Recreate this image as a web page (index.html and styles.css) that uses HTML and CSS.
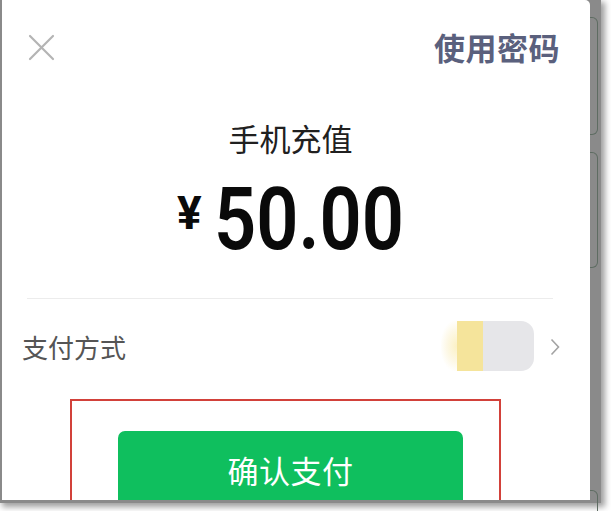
FILE: index.html
```html
<!DOCTYPE html>
<html lang="zh-CN">
<head>
<meta charset="utf-8">
<title>确认支付</title>
<link rel="stylesheet" href="styles.css">
</head>
<body>
<div class="screen">
  <div class="frame">
    <div class="panel">
      <header class="header">
        <svg class="close" width="27" height="27" viewBox="0 0 27 27" aria-hidden="true">
          <path d="M2 2L25 25M25 2L2 25" stroke="#b4b4b4" stroke-width="2.2" fill="none" stroke-linecap="round"/>
        </svg>
        <span class="pwd">使用密码</span>
      </header>
      <div class="title">手机充值</div>
      <div class="amount"><span class="yen">¥</span><span class="num">50.00</span></div>
      <div class="divider"></div>
      <div class="method">
        <span class="method-label">支付方式</span>
        <div class="method-right">
          <div class="card"><span class="glow"></span><span class="yellow"></span><span class="gray"></span></div>
          <svg class="chevron" width="10" height="18" viewBox="0 0 10 18" aria-hidden="true">
            <path d="M1.5 1.5L8.5 9L1.5 16.5" stroke="#a3a3a3" stroke-width="1.6" fill="none"/>
          </svg>
        </div>
      </div>
      <div class="highlight">
        <div class="btn">确认支付</div>
      </div>
    </div>
    <div class="strip">
      <div class="tab tab-1"></div>
      <div class="tab tab-2"></div>
      <div class="tab tab-3"></div>
    </div>
  </div>
</div>
</body>
</html>
```

FILE: styles.css
```css
* { box-sizing: border-box; }
html, body { margin: 0; padding: 0; background: #ffffff; }
body { font-family: "Noto Sans CJK SC", "Noto Sans", sans-serif; }

.screen {
  width: 611px;
  height: 511px;
  overflow: hidden;
  background: #ffffff;
}

.frame {
  width: 601px;
  height: 503px;
  display: flex;
  background: #8a8a8a;
  box-shadow: 3px 3px 6px 1px rgba(0, 0, 0, 0.38);
}

.panel {
  width: 588px;
  height: 500px;
  margin-left: 2px;
  background: #ffffff;
  border-top-right-radius: 5px;
  overflow: hidden;
  display: flex;
  flex-direction: column;
}

.header {
  height: 67px;
  padding: 27px 30px 0 26px;
  display: flex;
  justify-content: space-between;
  align-items: center;
  flex-shrink: 0;
}
.header > * { height: 40px; }
.close { width: 27px; height: 27px; }
.pwd {
  font-size: 31px;
  line-height: 40px;
  font-weight: 700;
  color: #5a607d;
  letter-spacing: 0.5px;
}

.title {
  margin-top: 51px;
  padding-right: 11px;
  text-align: center;
  font-size: 31px;
  line-height: 40px;
  color: #202020;
  flex-shrink: 0;
}

.amount {
  margin-top: 18px;
  height: 87px;
  padding-right: 11px;
  display: flex;
  justify-content: center;
  align-items: flex-start;
  color: #0a0a0a;
  font-family: Roboto, "Liberation Sans", sans-serif;
  font-weight: 700;
  flex-shrink: 0;
}
.yen {
  font-size: 46px;
  line-height: 46px;
  margin-top: 14px;
  margin-right: 12px;
}
.num {
  display: inline-block;
  font-size: 87px;
  line-height: 87px;
  font-weight: 600;
  transform: scaleX(0.85);
  transform-origin: left center;
  margin-right: -33px;
}

.divider {
  margin-top: 35px;
  margin-left: 25px;
  width: 526px;
  height: 1px;
  background: #ececec;
  flex-shrink: 0;
}

.method {
  height: 94px;
  padding: 0 30px 0 20px;
  display: flex;
  justify-content: space-between;
  align-items: center;
  flex-shrink: 0;
}
.method-label {
  font-size: 26px;
  line-height: 34px;
  color: #555555;
  margin-top: 2px;
}
.method-right {
  display: flex;
  align-items: center;
  gap: 16px;
}
.card {
  display: flex;
  height: 50px;
  width: 93px;
}
.glow {
  width: 16px;
  background: radial-gradient(ellipse at 100% 50%, #fbf1c4 0%, #fdf8e6 45%, rgba(255, 255, 255, 0) 75%);
}
.yellow {
  width: 26px;
  background: #f5e49b;
}
.gray {
  width: 51px;
  background: #e6e6e9;
  border-radius: 0 13px 13px 0;
}
.chevron { margin-top: 2px; }

.highlight {
  margin-top: 6px;
  margin-left: 68px;
  width: 431px;
  height: 160px;
  border: 2px solid #d2413a;
  padding: 30px 0 0 46px;
  flex-shrink: 0;
}
.btn {
  width: 345px;
  height: 120px;
  background: #0fbf5e;
  border-radius: 7px;
  color: #ffffff;
  text-align: center;
  font-size: 31px;
  line-height: 40px;
  padding-top: 19px;
  letter-spacing: 0.5px;
}

.strip {
  width: 11px;
  display: flex;
  flex-direction: column;
}
.tab {
  width: 8px;
  border: 1.5px solid #5e6c62;
  border-left: none;
  border-radius: 0 6px 6px 0;
  flex-shrink: 0;
}
.tab-1 { margin-top: 17px; height: 118px; }
.tab-2 { margin-top: 17px; height: 116px; }
.tab-3 { margin-top: 222px; height: 40px; }
```
